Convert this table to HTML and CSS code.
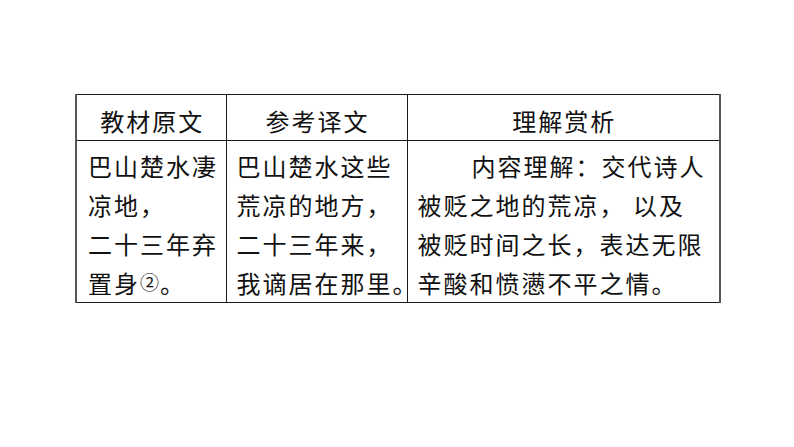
FILE: index.html
```html
<!DOCTYPE html>
<html lang="zh-CN">
<head>
<meta charset="utf-8">
<title>教材原文</title>
<link rel="stylesheet" href="styles.css">
</head>
<body>
<main class="page">
  <table class="notes">
    <colgroup>
      <col class="c1">
      <col class="c2">
      <col class="c3">
    </colgroup>
    <thead>
      <tr>
        <th>教材原文</th>
        <th>参考译文</th>
        <th>理解赏析</th>
      </tr>
    </thead>
    <tbody>
      <tr>
        <td>巴山楚水凄<br>凉地，<br>二十三年弃<br>置身<span class="fn">②</span>。</td>
        <td>巴山楚水这些<br>荒凉的地方，<br>二十三年来，<br>我谪居在那里。</td>
        <td><p class="para">内容理解：交代诗人<br>被贬之地的荒凉， 以及<br>被贬时间之长，表达无限<br>辛酸和愤懑不平之情。</p></td>
      </tr>
    </tbody>
  </table>
</main>
</body>
</html>
```

FILE: styles.css
```css
html, body {
  margin: 0;
  padding: 0;
  background: #ffffff;
}

.page {
  padding: 94px 0 0 75px;
  font-family: "Noto Sans CJK SC", "Noto Sans CJK JP", sans-serif;
  color: #111;
}

.notes {
  border-collapse: collapse;
  table-layout: fixed;
  width: 646px;
  border-left: 2px solid #555;
  border-right: 2px solid #555;
}

.c1 { width: 150px; }
.c2 { width: 181px; }
.c3 { width: 313px; }

.notes th,
.notes td {
  border: 1px solid #1a1a1a;
  font-size: 24px;
  letter-spacing: 2px;
  line-height: 38px;
  font-weight: normal;
  vertical-align: top;
}

.notes th {
  height: 37px;
  padding: 7px 0 0 2px;
  text-align: center;
}

.notes td {
  height: 156px;
  padding: 5px 0 0 10px;
  line-height: 39px;
  text-align: left;
  white-space: nowrap;
}

.notes td:first-child {
  padding-left: 11px;
}

.para {
  margin: 0;
  text-indent: 54px;
}

.fn {
  font-size: 19px;
  letter-spacing: 0;
  vertical-align: 3px;
  line-height: 1;
  margin: 0 1px 0 0;
}
```
